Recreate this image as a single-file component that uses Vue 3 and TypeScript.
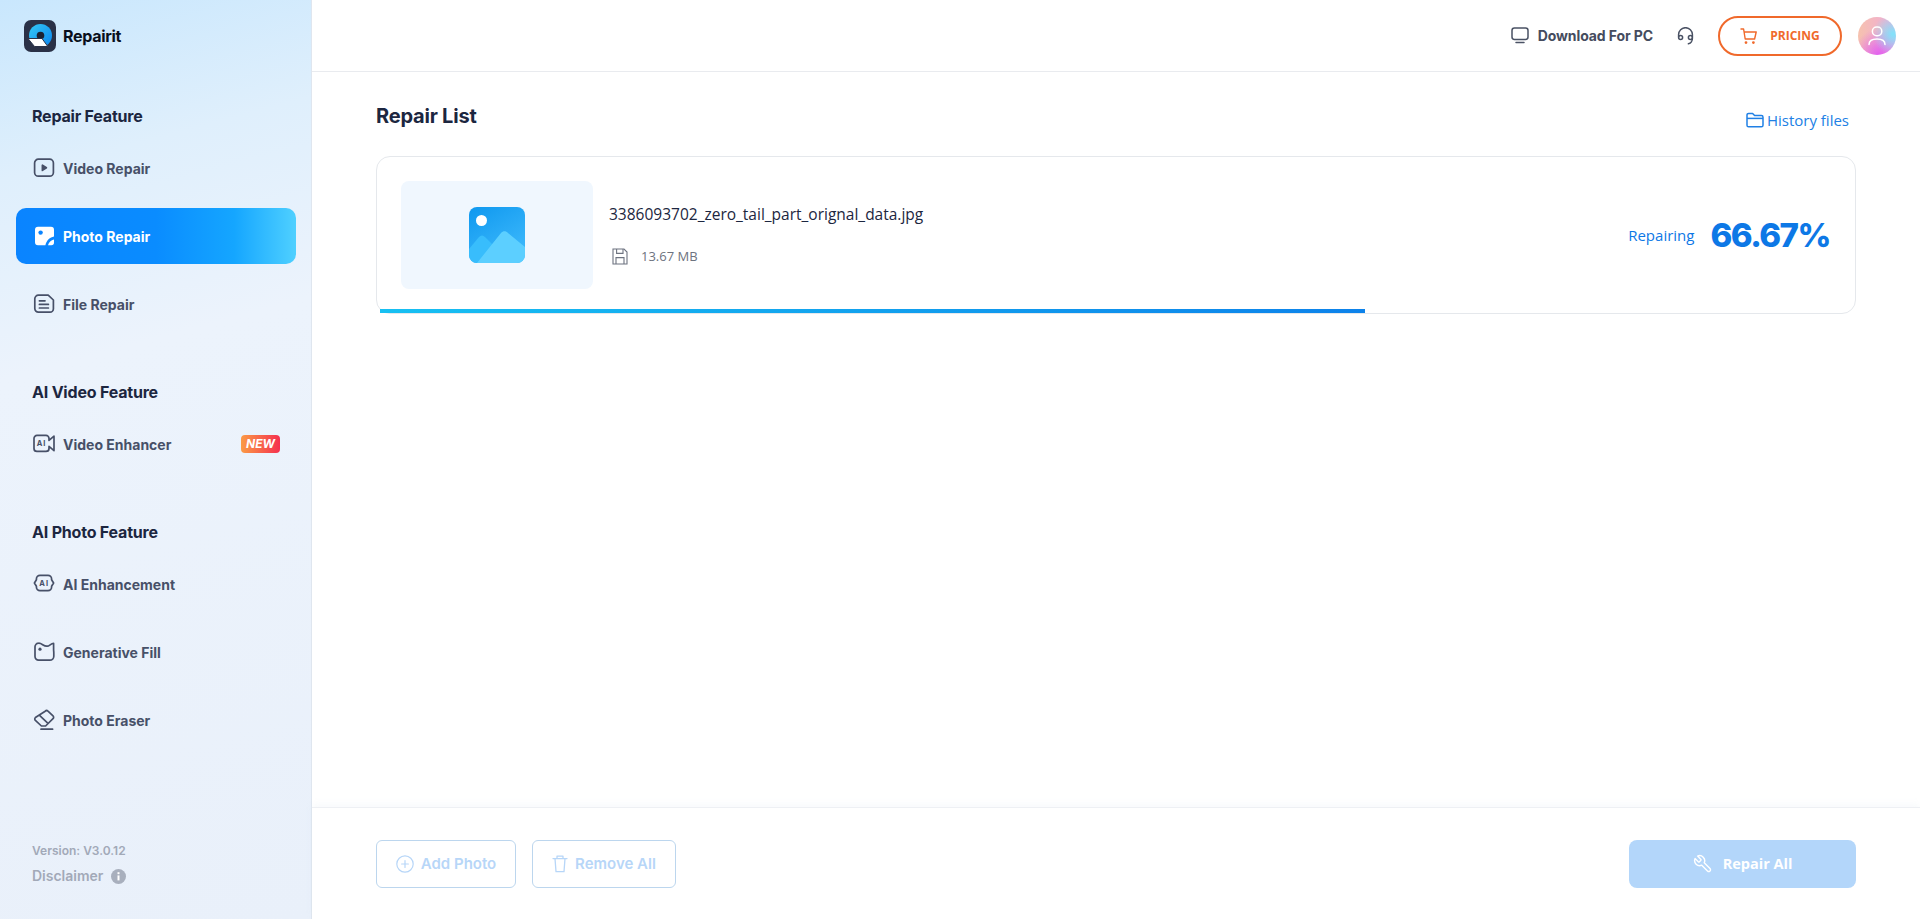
<script setup lang="ts">
interface NavItem { label: string; icon: string; active?: boolean; badge?: string }
interface NavSection { title: string; items: NavItem[] }
const sections: NavSection[] = [
  { title: 'Repair Feature', items: [
    { label: 'Video Repair', icon: 'video' },
    { label: 'Photo Repair', icon: 'photo', active: true },
    { label: 'File Repair', icon: 'file' },
  ]},
  { title: 'AI Video Feature', items: [
    { label: 'Video Enhancer', icon: 'aivideo', badge: 'NEW' },
  ]},
  { title: 'AI Photo Feature', items: [
    { label: 'AI Enhancement', icon: 'aienh' },
    { label: 'Generative Fill', icon: 'fill' },
    { label: 'Photo Eraser', icon: 'eraser' },
  ]},
]
const progress = 66.67
</script>

<template>
  <div class="app">
    <aside class="sidebar">
      <div class="brand">
        <svg class="logo" width="32" height="32" viewBox="0 0 32 32">
          <defs>
            <linearGradient id="lg" x1="0" y1="0" x2="1" y2="1">
              <stop offset="0" stop-color="#35c9f5" />
              <stop offset="1" stop-color="#0a84f0" />
            </linearGradient>
          </defs>
          <rect width="32" height="32" rx="7" fill="#2a3147" />
          <circle cx="16.5" cy="15.5" r="11.5" fill="url(#lg)" />
          <circle cx="16.5" cy="15.5" r="3.8" fill="#1c2233" />
          <path d="M4 18.5h14l5.8 8H10.5z" fill="#fff" stroke="#2a3147" stroke-width="1" />
        </svg>
        <span class="brand-name">Repairit</span>
      </div>
      <nav class="nav">
        <section v-for="s in sections" :key="s.title" class="nav-section">
          <h3 class="nav-title">{{ s.title }}</h3>
          <div class="nav-items">
            <a v-for="it in s.items" :key="it.label" class="nav-item" :class="{ active: it.active }">
              <svg class="nav-icon" width="22" height="22" viewBox="0 0 22 22" fill="none" stroke="currentColor" stroke-width="1.7" stroke-linecap="round" stroke-linejoin="round">
                <template v-if="it.icon === 'video'">
                  <rect x="1.6" y="2.2" width="18.8" height="17" rx="3.8" />
                  <path d="M9.4 8.2v5.2l4-2.6z" fill="currentColor" />
                </template>
                <template v-else-if="it.icon === 'photo'">
                  <path d="M5 1.8h13a3 3 0 0 1 3 3v6.6c-4 .8-7.6 3.8-8.6 8.8H5a3 3 0 0 1-3-3V4.8a3 3 0 0 1 3-3z" fill="#fff" stroke="none" />
                  <circle cx="7.6" cy="7.6" r="2.2" fill="#0a84ff" stroke="none" />
                  <path d="M21 14.4v3.2a2.6 2.6 0 0 1-2.6 2.6h-3.4c.7-2.8 3.1-5.1 6-5.8z" fill="#fff" stroke="none" />
                </template>
                <template v-else-if="it.icon === 'file'">
                  <path d="M5.4 2.2h9.8l5.2 4.8v8.8a3.4 3.4 0 0 1-3.4 3.4H5.4A3.6 3.6 0 0 1 1.8 15.6V5.8a3.6 3.6 0 0 1 3.6-3.6z" />
                  <path d="M6.4 7.8h5.6M6.4 11.4h9M6.4 15h9" />
                </template>
                <template v-else-if="it.icon === 'aivideo'">
                  <path d="M16 7.4V5.4a3 3 0 0 0-3-3H4a3 3 0 0 0-3 3v10a3 3 0 0 0 3 3h9a3 3 0 0 0 3-3v-2l5 4.2V3.2z" />
                  <text x="8.5" y="13.2" text-anchor="middle" font-size="7.5" font-weight="700" letter-spacing="1" font-family="Inter, sans-serif" fill="currentColor" stroke="none">AI</text>
                </template>
                <template v-else-if="it.icon === 'aienh'">
                  <path d="M3.4 6.8V6a3.6 3.6 0 0 1 3.6-3.6h8A3.6 3.6 0 0 1 18.6 6v.8l2 3.2-2 3.2v.8a3.6 3.6 0 0 1-3.6 3.6H7A3.6 3.6 0 0 1 3.4 14v-.8l-2-3.2z" />
                  <text x="11.2" y="12.8" text-anchor="middle" font-size="7.5" font-weight="700" letter-spacing="1" font-family="Inter, sans-serif" fill="currentColor" stroke="none">AI</text>
                </template>
                <template v-else-if="it.icon === 'fill'">
                  <path d="M5.6 2.2C9 2 10.4 5.4 14 5.2c2.8-.1 3.6-2.8 6.6-2.8v6c0 1.2.2 2.2.2 3.4v3.4a4 4 0 0 1-4 4H5.6A3.6 3.6 0 0 1 2 15.6V5.8a3.6 3.6 0 0 1 3.6-3.6z" />
                  <circle cx="7" cy="8.2" r="1.6" fill="currentColor" stroke="none" />
                </template>
                <template v-else>
                  <path d="M12.2 2.2a2 2 0 0 1 2.8 0l5 4.6a2 2 0 0 1 0 2.9l-7.4 7.3H8.4l-6-5.6a2 2 0 0 1 0-2.9z" />
                  <path d="M6.8 6.6l7.4 7M8 20.2h11.6" />
                </template>
              </svg>
              <span class="nav-label">{{ it.label }}</span>
              <span v-if="it.badge" class="badge">{{ it.badge }}</span>
            </a>
          </div>
        </section>
      </nav>
      <div class="side-foot">
        <div class="version">Version: V3.0.12</div>
        <div class="disclaimer">
          Disclaimer
          <svg width="15" height="15" viewBox="0 0 15 15">
            <circle cx="7.5" cy="7.5" r="7.5" fill="#a8afbd" />
            <rect x="6.5" y="6.4" width="2" height="5" fill="#fff" />
            <rect x="6.5" y="3.2" width="2" height="2" fill="#fff" />
          </svg>
        </div>
      </div>
    </aside>

    <div class="content">
      <header class="topbar">
        <a class="dl">
          <svg width="18" height="17" viewBox="0 0 18 17" fill="none" stroke="#4a5264" stroke-width="1.5" stroke-linecap="round">
            <rect x="1" y="1" width="16" height="11.4" rx="2.4" />
            <path d="M5 15.6h8" />
          </svg>
          <span>Download For PC</span>
        </a>
        <svg class="support" width="17" height="18" viewBox="0 0 17 18" fill="none" stroke="#4a5264" stroke-width="1.5" stroke-linecap="round">
          <path d="M1.6 10V7.6a6.9 6.9 0 0 1 13.8 0V10" />
          <circle cx="3.6" cy="10.6" r="2" />
          <circle cx="13.4" cy="10.6" r="2" />
          <path d="M15.4 11c0 3-1.4 5.2-4 5.8" />
        </svg>
        <button class="pricing">
          <svg width="18" height="18" viewBox="0 0 18 18" fill="none" stroke="#f0692b" stroke-width="1.4" stroke-linecap="round" stroke-linejoin="round">
            <path d="M1 2h2.6l1.6 10h9.4l1.6-7H4.2" />
            <circle cx="6" cy="15.6" r=".7" fill="#f0692b" />
            <circle cx="13.4" cy="15.6" r=".7" fill="#f0692b" />
          </svg>
          PRICING
        </button>
        <div class="avatar">
          <svg width="38" height="38" viewBox="0 0 38 38" fill="none" stroke="#fff" stroke-width="1.5" stroke-linecap="round">
            <rect x="14.4" y="10" width="9.4" height="8.8" rx="4.2" />
            <path d="M11 27.6c0-4 3-5.6 8-5.6s8 1.6 8 5.6" />
          </svg>
        </div>
      </header>

      <main class="main">
        <div class="list-head">
          <h2 class="list-title">Repair List</h2>
          <a class="history">
            <svg width="18" height="16" viewBox="0 0 18 16" fill="none" stroke="#2080e5" stroke-width="1.5" stroke-linejoin="round">
              <path d="M1 3a1.6 1.6 0 0 1 1.6-1.6h4l2 2.2h6.8A1.6 1.6 0 0 1 17 5.2v8a1.6 1.6 0 0 1-1.6 1.6H2.6A1.6 1.6 0 0 1 1 13.2z" />
              <path d="M1 6.4h16" />
            </svg>
            History files
          </a>
        </div>

        <div class="card">
          <div class="thumb">
            <svg width="56" height="56" viewBox="0 0 56 56">
              <defs>
                <linearGradient id="pg" x1="0" y1="0" x2="0.6" y2="1">
                  <stop offset="0" stop-color="#0f98ef" />
                  <stop offset="1" stop-color="#3cb8fb" />
                </linearGradient>
                <clipPath id="pc"><rect width="56" height="56" rx="8" /></clipPath>
              </defs>
              <g clip-path="url(#pc)">
                <rect width="56" height="56" fill="url(#pg)" />
                <path d="M0 42l10-12c2-2 4-2 6 0l12 12v14H0z" fill="#38bdfc" />
                <path d="M8 56l24-30c2-2.4 5-2.4 7 0l17 14v16z" fill="#5ccfff" />
              </g>
              <circle cx="12.5" cy="13.5" r="5.5" fill="#fff" />
            </svg>
          </div>
          <div class="info">
            <div class="fname">3386093702_zero_tail_part_orignal_data.jpg</div>
            <div class="fsize">
              <svg width="16" height="17" viewBox="0 0 16 17" fill="none" stroke="#6d7380" stroke-width="1.1">
                <path d="M1 1h11l3 3v12H1z" />
                <path d="M4.6 1v4.4h6.4V1M4 16v-6.4h8V16" />
              </svg>
              <span>13.67 MB</span>
            </div>
          </div>
          <div class="status">
            <span class="status-label">Repairing</span>
            <span class="percent">{{ progress.toFixed(2) }}%</span>
          </div>
          <div class="bar" :style="{ width: progress + '%' }"></div>
        </div>
      </main>

      <footer class="footer">
        <div class="foot-left">
          <button class="ghost add">
            <svg width="18" height="18" viewBox="0 0 18 18" fill="none" stroke="currentColor" stroke-width="1.2" stroke-linecap="round">
              <circle cx="9" cy="9" r="8.2" />
              <path d="M9 5.6v6.8M5.6 9h6.8" />
            </svg>
            Add Photo
          </button>
          <button class="ghost remove">
            <svg width="16" height="18" viewBox="0 0 16 18" fill="none" stroke="currentColor" stroke-width="1.3" stroke-linecap="round" stroke-linejoin="round">
              <path d="M1 3.6h14M5 3.6V1.2h6v2.4M3 3.6l1 13h8l1-13" />
            </svg>
            Remove All
          </button>
        </div>
        <button class="repair-all">
          <svg class="wrench" width="20" height="20" viewBox="0 0 24 24" fill="none" stroke="#fff" stroke-width="1.7" stroke-linecap="round" stroke-linejoin="round">
            <path transform="matrix(-1 0 0 1 24 0)" d="M14.7 6.3a1 1 0 0 0 0 1.4l1.6 1.6a1 1 0 0 0 1.4 0l3.77-3.77a6 6 0 0 1-7.94 7.94l-6.91 6.91a2.12 2.12 0 0 1-3-3l6.91-6.91a6 6 0 0 1 7.94-7.94l-3.76 3.76z" />
          </svg>
          Repair All
        </button>
      </footer>
    </div>
  </div>
</template>

<style scoped>
.app {
  display: flex;
  width: 1920px;
  height: 919px;
  overflow: hidden;
  background: #fff;
  font-family: Inter, "Liberation Sans", sans-serif;
}
.sidebar {
  width: 312px;
  flex: none;
  box-sizing: border-box;
  display: flex;
  flex-direction: column;
  border-right: 1px solid #dfe6ef;
  background: linear-gradient(165deg, #c9e7fd 0%, #dfeffc 18%, #ecf3fc 38%, #e9f0fa 100%);
}
.brand {
  display: flex;
  align-items: center;
  gap: 7px;
  padding: 20px 0 0 24px;
  height: 32px;
}
.brand-name {
  font-size: 16px;
  font-weight: 700;
  color: #0a0f1c;
  letter-spacing: -0.3px;
}
.nav {
  display: flex;
  flex-direction: column;
  gap: 48px;
  margin-top: 52px;
}
.nav-title {
  margin: 0 0 12px 32px;
  font-size: 16px;
  line-height: 24px;
  font-weight: 700;
  color: #1c2640;
  letter-spacing: -0.2px;
}
.nav-items {
  display: flex;
  flex-direction: column;
  gap: 12px;
}
.nav-item {
  display: flex;
  align-items: center;
  width: 280px;
  height: 56px;
  margin-left: 16px;
  padding: 0 16px 0 17px;
  box-sizing: border-box;
  border-radius: 10px;
  color: #475068;
  font-size: 14px;
  font-weight: 700;
}
.nav-item.active {
  color: #fff;
  background: linear-gradient(90deg, #0a84ff 0%, #0a8cff 50%, #15a6ff 78%, #4fd0ff 100%);
}
.nav-icon { flex: none; margin-right: 8px; }
.nav-label { flex: 1; }
.badge {
  width: 39px;
  height: 18px;
  border-radius: 4px;
  background: linear-gradient(90deg, #fb9a45, #f5304f);
  color: #fff;
  font-size: 12px;
  line-height: 18px;
  font-weight: 700;
  font-style: italic;
  text-align: center;
}
.side-foot {
  margin-top: auto;
  padding: 0 0 34px 32px;
  color: #a2a9b8;
  font-weight: 600;
}
.version { font-size: 12px; line-height: 18px; }
.disclaimer {
  display: flex;
  align-items: center;
  gap: 8px;
  margin-top: 7px;
  font-size: 14px;
  line-height: 18px;
}
.content {
  flex: 1;
  min-width: 0;
  display: flex;
  flex-direction: column;
}
.topbar {
  height: 72px;
  flex: none;
  box-sizing: border-box;
  display: flex;
  align-items: center;
  padding: 0 24px 0 0;
  justify-content: flex-end;
  border-bottom: 1px solid #e9ebef;
}
.dl {
  display: flex;
  align-items: center;
  gap: 9px;
  color: #454c5e;
  font-size: 14px;
  font-weight: 700;
  letter-spacing: -0.1px;
}
.support { margin-left: 24px; }
.pricing {
  margin-left: 24px;
  width: 124px;
  height: 40px;
  display: flex;
  align-items: center;
  justify-content: center;
  gap: 12px;
  background: #fff;
  border: 2px solid #f0692b;
  border-radius: 20px;
  color: #f0692b;
  font-family: "Open Sans", sans-serif;
  font-size: 12px;
  font-weight: 700;
}
.avatar {
  margin-left: 16px;
  width: 38px;
  height: 38px;
  border-radius: 50%;
  background:
    radial-gradient(circle at 92% 45%, #7fe3fb 0, rgba(127, 227, 251, 0) 50%),
    radial-gradient(circle at 55% 100%, #e25ff0 0, rgba(226, 95, 240, 0) 60%),
    linear-gradient(90deg, #f6c2ae, #f0a8dc);
}
.main {
  flex: 1;
  padding: 0 64px;
}
.list-head {
  display: flex;
  justify-content: space-between;
  align-items: flex-start;
  height: 84px;
}
.list-title {
  margin: 0;
  padding-top: 30px;
  font-size: 20px;
  line-height: 28px;
  font-weight: 700;
  color: #1c2640;
  letter-spacing: -0.2px;
}
.history {
  display: flex;
  align-items: center;
  gap: 3px;
  padding: 38px 7px 0 0;
  font-family: "Open Sans", sans-serif;
  font-size: 15px;
  line-height: 20px;
  color: #2080e5;
}
.card {
  position: relative;
  height: 158px;
  box-sizing: border-box;
  display: flex;
  align-items: flex-start;
  padding: 24px 25px 0 24px;
  border: 1px solid #e5e8ec;
  border-radius: 14px;
}
.thumb {
  width: 192px;
  height: 108px;
  flex: none;
  display: flex;
  align-items: center;
  justify-content: center;
  background: #f0f7fe;
  border-radius: 8px;
}
.info {
  margin-left: 16px;
  flex: 1;
  font-family: "Open Sans", sans-serif;
  padding-top: 22px;
}
.fname {
  font-size: 15.5px;
  line-height: 22px;
  color: #1c2640;
}
.fsize {
  display: flex;
  align-items: center;
  gap: 13px;
  margin-top: 22px;
  margin-left: 3px;
  font-size: 13px;
  line-height: 18px;
  color: #6d7380;
}
.status {
  display: flex;
  align-items: center;
  gap: 16px;
  height: 108px;
  color: #0d78e6;
}
.status-label {
  font-family: "Open Sans", sans-serif;
  font-size: 15px;
}
.percent {
  font-size: 33px;
  font-weight: 800;
  letter-spacing: -1.5px;
}
.bar {
  position: absolute;
  left: 3px;
  bottom: 0;
  height: 4px;
  background: linear-gradient(90deg, #17c0f2, #0d82ea);
}
.footer {
  height: 112px;
  flex: none;
  box-sizing: border-box;
  display: flex;
  justify-content: space-between;
  align-items: center;
  padding: 0 64px;
  border-top: 1px solid #eef0f4;
  box-shadow: 0 -3px 6px rgba(200, 210, 230, 0.12);
}
.foot-left { display: flex; gap: 16px; }
.ghost {
  height: 48px;
  display: flex;
  align-items: center;
  justify-content: center;
  gap: 7px;
  background: #fff;
  border: 1px solid #bcd6ee;
  border-radius: 6px;
  color: #b7d6f8;
  font-family: Inter, sans-serif;
  font-size: 15px;
  font-weight: 600;
  padding: 0;
}
.add { width: 140px; }
.remove { width: 144px; }
.repair-all {
  width: 227px;
  height: 48px;
  display: flex;
  align-items: center;
  justify-content: center;
  gap: 10px;
  background: #b3d6fa;
  border: none;
  border-radius: 8px;
  color: #fff;
  font-family: "Open Sans", sans-serif;
  font-size: 14.5px;
  font-weight: 700;
}
</style>
